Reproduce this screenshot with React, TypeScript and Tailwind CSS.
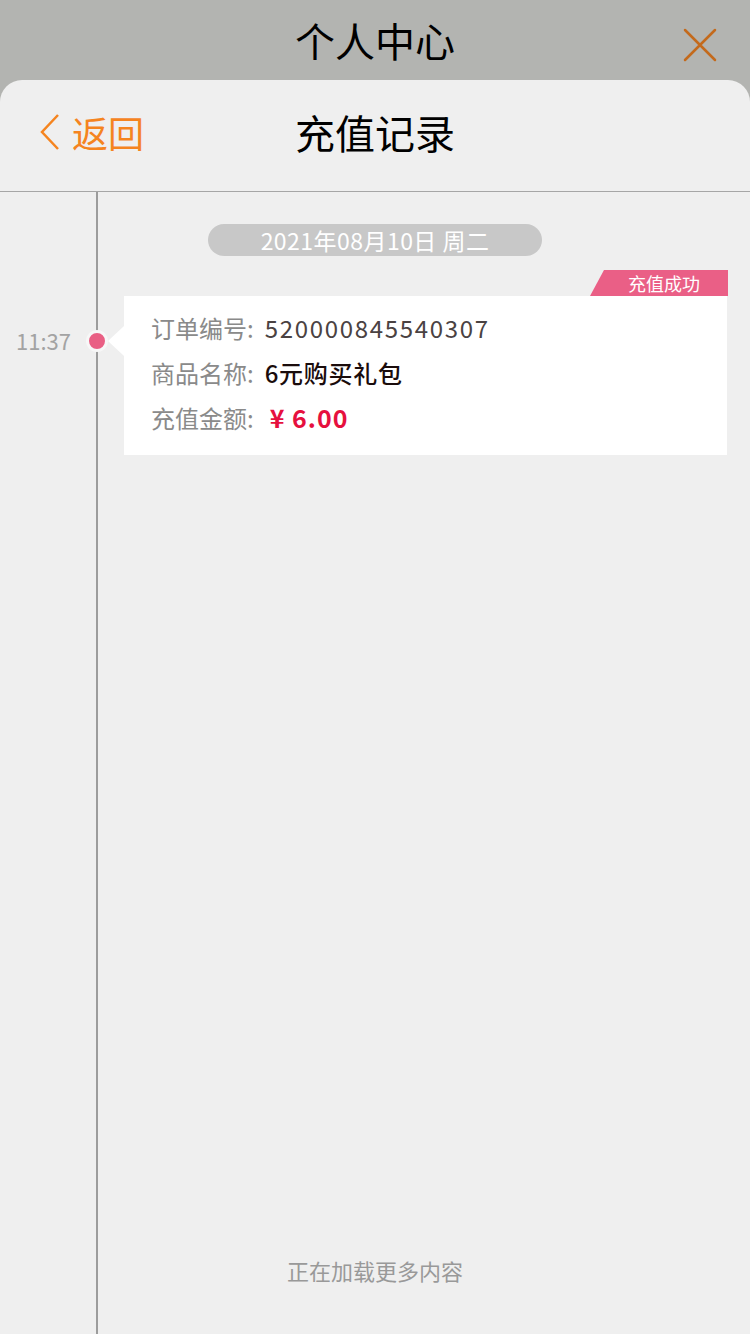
const cjk = { fontFamily: '"Noto Sans CJK SC", "Liberation Sans", sans-serif' };

function CloseIcon() {
  return (
    <svg width="34" height="34" viewBox="0 0 34 34" fill="none">
      <path d="M2 2 L32 32 M32 2 L2 32" stroke="#c46a1c" strokeWidth="2.5" strokeLinecap="round" />
    </svg>
  );
}

function BackIcon() {
  return (
    <svg width="22" height="36" viewBox="0 0 22 36" fill="none">
      <path d="M19 1 L3 18 L19 35" stroke="#f5841f" strokeWidth="2.5" strokeLinejoin="miter" />
    </svg>
  );
}

function InfoRow({ label, value, valueClass }: { label: string; value: string; valueClass: string }) {
  return (
    <div className="flex h-[45px] items-center text-[24px]">
      <span className="text-[#8a8a8a]">{label}:</span>
      <span className={`ml-[11px] ${valueClass}`}>{value}</span>
    </div>
  );
}

export default function App() {
  return (
    <div className="flex h-[1334px] w-[750px] flex-col overflow-hidden bg-[#b3b4b1]" style={cjk}>
      {/* top bar */}
      <div className="relative flex h-[80px] shrink-0 items-center justify-center">
        <h1 className="text-[40px] leading-none text-black">个人中心</h1>
        <button className="absolute right-[33px] top-[28px]">
          <CloseIcon />
        </button>
      </div>

      {/* sheet */}
      <div className="flex flex-1 flex-col rounded-t-[22px] bg-[#efefef]">
        <header className="grid h-[112px] shrink-0 grid-cols-[1fr_auto_1fr] items-center border-b border-[#a6a6a6] pb-[7px]">
          <div className="flex items-center pl-[39px]">
            <BackIcon />
            <span className="ml-[11px] text-[36px] leading-none text-[#f5841f]">返回</span>
          </div>
          <h2 className="text-[40px] leading-none text-black">充值记录</h2>
          <div />
        </header>

        <div className="relative flex flex-1 flex-col">
          <div className="absolute bottom-0 left-[96px] top-0 w-[2px] bg-[#9c9c9c]" />

          <div className="flex justify-center pt-[32px]">
            <div className="flex h-[32px] w-[334px] items-center justify-center rounded-full bg-[#c8c8c8] text-[23px] tracking-[0.02em] text-white">
              2021年08月10日 周二
            </div>
          </div>

          <div className="mt-[14px] flex justify-end pr-[22px]">
            <div className="relative flex h-[26px] w-[138px] items-center justify-end pr-[28px] text-[18px] text-white">
              <div className="absolute inset-0 bg-[#ea5f86] [clip-path:polygon(14px_0,100%_0,100%_100%,0_100%)]" />
              <span className="relative">充值成功</span>
            </div>
          </div>

          <div className="flex pr-[23px]">
            <div className="relative w-[124px] shrink-0">
              <div className="pl-[16px] pt-[31px] text-[22px] leading-[26px] text-[#a3a3a3]">11:37</div>
              <div className="absolute left-[86px] top-[34px] h-[22px] w-[22px] rounded-full border-[3px] border-[#f7f7f7] bg-[#e95f84]" />
            </div>
            <div className="relative flex-1 bg-white pb-[15px] pl-[27px] pt-[9px]">
              <div className="absolute left-[-16px] top-[30px] h-0 w-0 border-y-[15px] border-r-[16px] border-y-transparent border-r-white" />
              <InfoRow label="订单编号" value="520000845540307" valueClass="text-[#4a4242] tracking-[0.07em]" />
              <InfoRow label="商品名称" value="6元购买礼包" valueClass="font-medium text-[#1a0c0c] tracking-[0.03em]" />
              <InfoRow label="充值金额" value="¥ 6.00" valueClass="ml-[16px] text-[25px] font-semibold tracking-[0.04em] text-[#e6103e]" />
            </div>
          </div>

          <div className="mt-auto pb-[49px] text-center text-[22px] leading-[30px] text-[#999999]">
            正在加载更多内容
          </div>
        </div>
      </div>
    </div>
  );
}
